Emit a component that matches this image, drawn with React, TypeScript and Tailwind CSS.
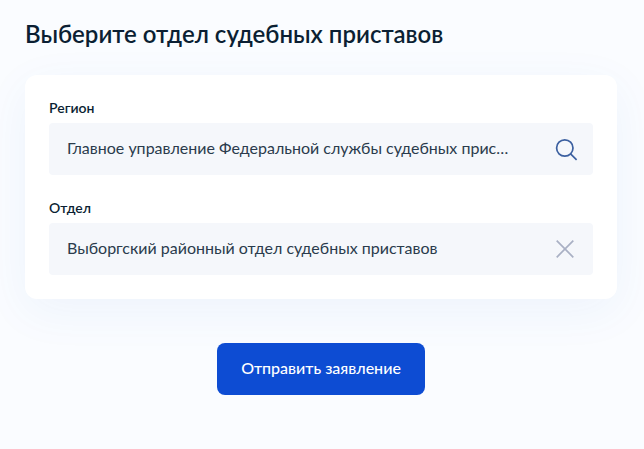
import { useState } from 'react';

export default function App() {
  const [region, setRegion] = useState('Главное управление Федеральной службы судебных приставов');
  const [department, setDepartment] = useState('Выборгский районный отдел судебных приставов');

  return (
    <main className="min-h-screen bg-[#fafcff] pt-4 pr-[27px] pb-12 pl-[25px] font-['Lato',sans-serif] text-[#0b1f33]">
      <h1 className="text-[24px] leading-9 font-semibold">Выберите отдел судебных приставов</h1>

      <form className="mt-[23px]" onSubmit={(e) => e.preventDefault()}>
        <div className="space-y-6 rounded-xl bg-white p-6 shadow-[0_12px_48px_rgba(35,103,200,0.06)]">
          <div>
            <label htmlFor="region" className="block pb-1.5 text-[14px] leading-[18px] font-semibold">Регион</label>
            <div className="flex h-[52px] items-center rounded bg-[#f5f7fb] pr-4 pl-[18px]">
              <input
                id="region"
                value={region}
                onChange={(e) => setRegion(e.target.value)}
                className="mr-11 min-w-0 flex-1 bg-transparent pb-0.5 text-[16px] text-[#2a3b4c] text-ellipsis outline-none"
              />
              <button type="button" aria-label="Найти">
                <svg className="size-6 overflow-visible" viewBox="0 0 24 24" fill="none" stroke="#3c60a0" strokeWidth="1.7">
                  <circle cx="11.8" cy="11" r="8.2" />
                  <path d="M17.6 16.8l6 6" />
                </svg>
              </button>
            </div>
          </div>
          <div>
            <label htmlFor="department" className="block pb-1.5 text-[14px] leading-[18px] font-semibold">Отдел</label>
            <div className="flex h-[52px] items-center rounded bg-[#f5f7fb] pr-4 pl-[18px]">
              <input
                id="department"
                value={department}
                onChange={(e) => setDepartment(e.target.value)}
                className="mr-11 min-w-0 flex-1 bg-transparent pb-0.5 text-[16px] text-[#2a3b4c] text-ellipsis outline-none"
              />
              <button type="button" aria-label="Очистить" onClick={() => setDepartment('')}>
                <svg className="size-6" viewBox="0 0 24 24" fill="none" stroke="#a9b0c4" strokeWidth="1.7">
                  <path d="M3.7 3.7l16.6 16.6M20.3 3.7L3.7 20.3" />
                </svg>
              </button>
            </div>
          </div>
        </div>

        <button type="submit" className="mx-auto mt-11 block h-[52px] rounded-lg bg-[#0d4cd3] px-6 pb-0.5 text-[16px] font-medium text-white">
          Отправить заявление
        </button>
      </form>
    </main>
  );
}
